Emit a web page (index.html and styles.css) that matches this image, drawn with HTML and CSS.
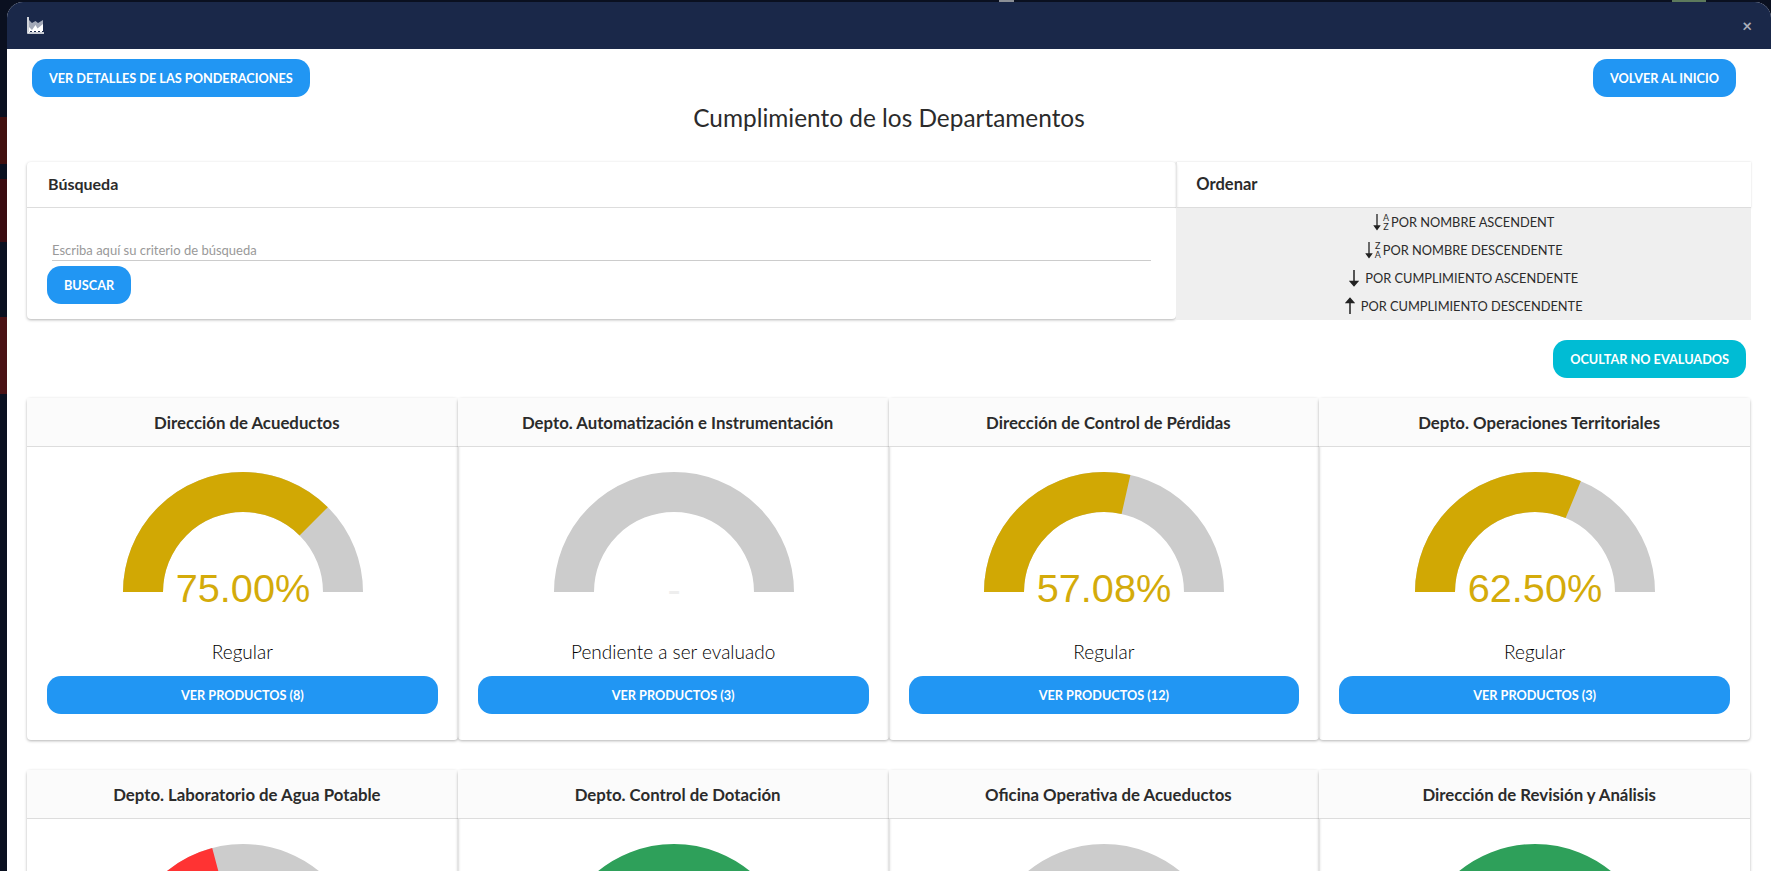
FILE: index.html
```html
<!DOCTYPE html>
<html lang="es">
<head>
    <meta charset="UTF-8">
    <title>Cumplimiento de los Departamentos</title>
    <link rel="stylesheet" href="styles.css">
</head>
<body>
    <div class="modal">
        <div class="modal-head">
            <svg class="logo" viewBox="0 0 17 17">
                <path d="M2 15V3l3 3 3.500-2 2.500 2 5-3v12z" fill="#a3a9b8"/>
                <path d="M2 15v-5l3 3 3.500-5 2 3.500L16 7v8z" fill="#fff"/>
                <path d="M1 0v16h16" fill="none" stroke="#fff" stroke-width="1.600"/>
                <path d="M3 14.500h13" stroke="#1a2849" stroke-width="1" stroke-dasharray="2 2"/>
            </svg>
            <span class="close">×</span>
        </div>

        <div class="modal-body">
            <div class="top-actions">
                <button class="btn">VER DETALLES DE LAS PONDERACIONES</button>
                <button class="btn">VOLVER AL INICIO</button>
            </div>

            <h1 class="title">Cumplimiento de los Departamentos</h1>

            <div class="panels">
                <div class="panel">
                    <div class="panel-head">Búsqueda</div>
                    <div class="search-body">
                        <input class="search-input" type="text" placeholder="Escriba aquí su criterio de búsqueda">
                        <button class="btn btn-search">BUSCAR</button>
                    </div>
                </div>
                <div class="panel-sort">
                    <div class="panel-head">Ordenar</div>
                    <div class="sort-list">
                        <div class="sort-row">
                            <svg class="arrow" viewBox="0 0 8 18"><path d="M4 1v13M1.500 13h5L4 16.500z" fill="#222" stroke="#222" stroke-width="1.300"/></svg>
                            <span class="letters"><span>A</span><span>Z</span></span>
                            POR NOMBRE ASCENDENT
                        </div>
                        <div class="sort-row">
                            <svg class="arrow" viewBox="0 0 8 18"><path d="M4 1v13M1.500 13h5L4 16.500z" fill="#222" stroke="#222" stroke-width="1.300"/></svg>
                            <span class="letters"><span>Z</span><span>A</span></span>
                            POR NOMBRE DESCENDENTE
                        </div>
                        <div class="sort-row">
                            <svg class="arrow arrow-wide" viewBox="0 0 10 18"><path d="M5 1v13M1.500 12.500h7L5 16.500z" fill="#222" stroke="#222" stroke-width="1.500"/></svg>
                            POR CUMPLIMIENTO ASCENDENTE
                        </div>
                        <div class="sort-row">
                            <svg class="arrow arrow-wide" viewBox="0 0 10 18"><path d="M5 17V4M1.500 5.500h7L5 1.500z" fill="#222" stroke="#222" stroke-width="1.500"/></svg>
                            POR CUMPLIMIENTO DESCENDENTE
                        </div>
                    </div>
                </div>
            </div>

            <div class="filter-row">
                <button class="btn btn-cyan">OCULTAR NO EVALUADOS</button>
            </div>

            <div class="cards">
                <div class="card">
                    <div class="card-head">Dirección de Acueductos</div>
                    <div class="card-body">
                        <svg class="gauge" viewBox="0 0 240 140">
                            <path class="gauge-bg" pathLength="100" d="M20 120A100 100 0 0 1 220 120"/>
                            <path class="gauge-val val-yellow" pathLength="100" stroke-dasharray="75 100" d="M20 120A100 100 0 0 1 220 120"/>
                            <text class="gauge-text text-yellow" x="120" y="130">75.00%</text>
                        </svg>
                        <div class="status">Regular</div>
                        <button class="btn btn-block">VER PRODUCTOS (8)</button>
                    </div>
                </div>
                <div class="card">
                    <div class="card-head">Depto. Automatización e Instrumentación</div>
                    <div class="card-body">
                        <svg class="gauge" viewBox="0 0 240 140">
                            <path class="gauge-bg" pathLength="100" d="M20 120A100 100 0 0 1 220 120"/>
                            <text class="gauge-text text-none" x="120" y="131">-</text>
                        </svg>
                        <div class="status">Pendiente a ser evaluado</div>
                        <button class="btn btn-block">VER PRODUCTOS (3)</button>
                    </div>
                </div>
                <div class="card">
                    <div class="card-head">Dirección de Control de Pérdidas</div>
                    <div class="card-body">
                        <svg class="gauge" viewBox="0 0 240 140">
                            <path class="gauge-bg" pathLength="100" d="M20 120A100 100 0 0 1 220 120"/>
                            <path class="gauge-val val-yellow" pathLength="100" stroke-dasharray="57.08 100" d="M20 120A100 100 0 0 1 220 120"/>
                            <text class="gauge-text text-yellow" x="120" y="130">57.08%</text>
                        </svg>
                        <div class="status">Regular</div>
                        <button class="btn btn-block">VER PRODUCTOS (12)</button>
                    </div>
                </div>
                <div class="card">
                    <div class="card-head">Depto. Operaciones Territoriales</div>
                    <div class="card-body">
                        <svg class="gauge" viewBox="0 0 240 140">
                            <path class="gauge-bg" pathLength="100" d="M20 120A100 100 0 0 1 220 120"/>
                            <path class="gauge-val val-yellow" pathLength="100" stroke-dasharray="62.5 100" d="M20 120A100 100 0 0 1 220 120"/>
                            <text class="gauge-text text-yellow" x="120" y="130">62.50%</text>
                        </svg>
                        <div class="status">Regular</div>
                        <button class="btn btn-block">VER PRODUCTOS (3)</button>
                    </div>
                </div>
                <div class="card">
                    <div class="card-head">Depto. Laboratorio de Agua Potable</div>
                    <div class="card-body">
                        <svg class="gauge" viewBox="0 0 240 140">
                            <path class="gauge-bg" pathLength="100" d="M20 120A100 100 0 0 1 220 120"/>
                            <path class="gauge-val val-red" pathLength="100" stroke-dasharray="41.7 100" d="M20 120A100 100 0 0 1 220 120"/>
                        </svg>
                    </div>
                </div>
                <div class="card">
                    <div class="card-head">Depto. Control de Dotación</div>
                    <div class="card-body">
                        <svg class="gauge" viewBox="0 0 240 140">
                            <path class="gauge-val val-green" pathLength="100" d="M20 120A100 100 0 0 1 220 120"/>
                        </svg>
                    </div>
                </div>
                <div class="card">
                    <div class="card-head">Oficina Operativa de Acueductos</div>
                    <div class="card-body">
                        <svg class="gauge" viewBox="0 0 240 140">
                            <path class="gauge-bg" pathLength="100" d="M20 120A100 100 0 0 1 220 120"/>
                        </svg>
                    </div>
                </div>
                <div class="card">
                    <div class="card-head">Dirección de Revisión y Análisis</div>
                    <div class="card-body">
                        <svg class="gauge" viewBox="0 0 240 140">
                            <path class="gauge-val val-green" pathLength="100" d="M20 120A100 100 0 0 1 220 120"/>
                        </svg>
                    </div>
                </div>
            </div>
        </div>
    </div>
</body>
</html>
```

FILE: styles.css
```css
html, body {
    height: 100%;
}

body {
    margin: 0;
    padding: 2px 0 0 7px;
    box-sizing: border-box;
    overflow: hidden;
    font-family: "Lato", "Noto Sans", sans-serif;
    color: #2b2b2b;
    background-color: #0a1020;
    background-image:
        linear-gradient(#41100f, #41100f),
        linear-gradient(#3a0b10, #3a0b10),
        linear-gradient(#4a1214, #4a1214),
        linear-gradient(#5d7a5c, #5d7a5c),
        linear-gradient(#8b8f96, #8b8f96);
    background-repeat: no-repeat;
    background-size: 7px 47px, 7px 63px, 7px 77px, 34px 2px, 15px 2px;
    background-position: 0 117px, 0 179px, 0 317px, 1672px 0, 999px 0;
}

.modal {
    height: 100%;
    overflow: hidden;
    background-color: #fff;
    border-radius: 16px 16px 0 0;
}

.modal-head {
    height: 47px;
    display: flex;
    align-items: center;
    justify-content: space-between;
    padding: 0 20px;
    background-color: #1a2849;
}

.logo {
    width: 17px;
    height: 17px;
    margin-top: -1px;
}

.close {
    color: #a9aebb;
    font-size: 17px;
    font-weight: 700;
    margin-right: -1px;
}

.modal-body {
    padding-top: 10px;
}

.btn {
    height: 38px;
    padding: 0 17px;
    background-color: #2196f3;
    color: #fff;
    border: none;
    border-radius: 14px;
    font-family: inherit;
    font-size: 12.700px;
    font-weight: 700;
    cursor: pointer;
}

.top-actions {
    display: flex;
    justify-content: space-between;
    padding: 0 35px 0 25px;
}

.title {
    margin: 3px 0 26px;
    font-size: 24.400px;
    line-height: 36px;
    font-weight: 400;
    text-align: center;
}

.panels {
    display: grid;
    grid-template-columns: 2fr 1fr;
    margin: 0 20px;
}

.panel {
    height: 157px;
    border-radius: 4px;
    box-shadow: 0 1px 3px rgba(0, 0, 0, 0.3);
}

.panel-head {
    height: 45px;
    padding-left: 21px;
    line-height: 44px;
    font-size: 16px;
    font-weight: 700;
    border-bottom: 1px solid #ddd;
}

.panel-sort .panel-head {
    padding-left: 19px;
    line-height: 45px;
    font-size: 16.500px;
    border-left: 1px solid #e6e6e6;
    box-shadow: 0 0 2px rgba(0, 0, 0, 0.15);
}

.search-body {
    padding: 23px 20px 0;
}

.search-input {
    display: block;
    width: 1099px;
    height: 30px;
    margin: 0 0 5px 5px;
    padding: 8px 0 0;
    box-sizing: border-box;
    border: none;
    border-bottom: 1px solid #ccc;
    outline: none;
    font-family: inherit;
    font-size: 13px;
}

.search-input::placeholder {
    color: #999;
}

.sort-list {
    background-color: #efefef;
}

.sort-row {
    height: 28px;
    display: flex;
    align-items: center;
    justify-content: center;
    gap: 2px;
    font-size: 12.800px;
}

.arrow {
    width: 8px;
    height: 18px;
}

.arrow-wide {
    width: 10px;
    margin-right: 4px;
}

.letters {
    display: flex;
    flex-direction: column;
    font-size: 9px;
    line-height: 9px;
    text-align: center;
}

.filter-row {
    display: flex;
    justify-content: flex-end;
    margin: 20px 25px 20px 0;
}

.btn-cyan {
    background-color: #00bcd4;
}

.cards {
    display: grid;
    grid-template-columns: repeat(4, 1fr);
    row-gap: 29.600px;
    margin: 0 21px 0 20px;
}

.card {
    border-radius: 4px;
    box-shadow: 0 1px 3px rgba(0, 0, 0, 0.3);
}

.card-head {
    height: 48px;
    padding-left: 9px;
    line-height: 50px;
    text-align: center;
    font-size: 16.800px;
    font-weight: 700;
    background-color: #fbfbfb;
    border-bottom: 1px solid #ddd;
}

.card-body {
    padding: 25px 20px 26px;
    display: flex;
    flex-direction: column;
    align-items: center;
}

.gauge {
    width: 240px;
    height: 140px;
    margin-left: 1px;
}

.gauge-bg, .gauge-val {
    fill: none;
    stroke-width: 40;
}

.gauge-bg {
    stroke: #ccc;
}

.val-yellow {
    stroke: #d1a804;
}

.val-red {
    stroke: #ff3333;
}

.val-green {
    stroke: #2ea05a;
}

.gauge-text {
    font-family: "Liberation Sans", Arial, sans-serif;
    font-size: 39.700px;
    text-anchor: middle;
}

.text-yellow {
    fill: #d4ab0a;
}

.text-none {
    fill: #eee;
}

.status {
    margin-top: 28px;
    height: 24px;
    line-height: 24px;
    font-size: 19px;
    font-weight: 300;
    color: #000;
}

.btn-block {
    width: 100%;
    margin-top: 12px;
}
```
